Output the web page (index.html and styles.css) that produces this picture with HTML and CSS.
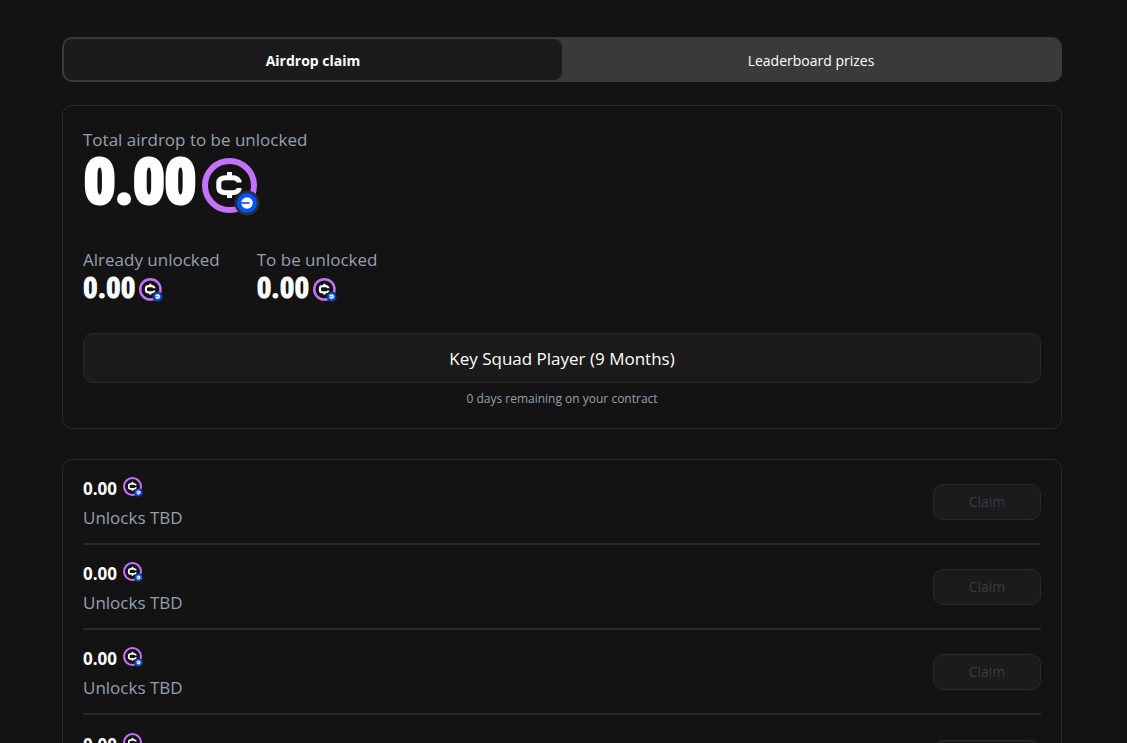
FILE: index.html
```html
<!DOCTYPE html>
<html lang="en">
<head>
  <meta charset="UTF-8" />
  <meta name="viewport" content="width=device-width, initial-scale=1.0"/>
  <title>Airdrop claim</title>
  <link rel="stylesheet" href="styles.css">
</head>
<body>

  <!-- Shared coin icon -->
  <svg class="sprite" aria-hidden="true">
    <symbol id="coin" viewBox="0 0 58 58">
      <circle cx="27.5" cy="27.5" r="24.5" fill="#131313" stroke="#c571ff" stroke-width="6"/>
      <path d="M37 24.5V23Q35 19.700 31 19.700H24Q16.800 19.700 16.800 25V29.500Q16.800 34.700 24 34.700H31Q35 34.700 37 31.500V30" fill="none" stroke="#fff" stroke-width="5"/>
      <rect x="25" y="14" width="5" height="5" fill="#fff"/>
      <rect x="25" y="35" width="5" height="5" fill="#fff"/>
      <circle cx="45" cy="45" r="12.5" fill="#26303d"/>
      <circle cx="45" cy="45" r="10" fill="#0052ff"/>
      <circle cx="45" cy="45" r="5.8" fill="#fff"/>
      <path d="M39 45h8.500" stroke="#0052ff" stroke-width="1.6"/>
    </symbol>
  </svg>

  <main class="container">
    <div class="tabs">
      <button type="button" class="tab active">Airdrop claim</button>
      <button type="button" class="tab">Leaderboard prizes</button>
    </div>

    <section class="card summary">
      <div class="label">Total airdrop to be unlocked</div>
      <div class="total">0.00 <svg class="coin-lg"><use href="#coin"/></svg></div>

      <div class="stats">
        <div>
          <div class="label">Already unlocked</div>
          <div class="amount">0.00 <svg class="coin-md"><use href="#coin"/></svg></div>
        </div>
        <div>
          <div class="label">To be unlocked</div>
          <div class="amount">0.00 <svg class="coin-md"><use href="#coin"/></svg></div>
        </div>
      </div>

      <button type="button" class="contract">Key Squad Player (9 Months)</button>
      <p class="remaining">0 days remaining on your contract</p>
    </section>

    <section class="card unlocks">
      <div class="unlock">
        <div class="info">
          <div class="value">0.00 <svg class="coin-sm"><use href="#coin"/></svg></div>
          <div class="label">Unlocks TBD</div>
        </div>
        <button type="button" class="claim" disabled>Claim</button>
      </div>
      <div class="unlock">
        <div class="info">
          <div class="value">0.00 <svg class="coin-sm"><use href="#coin"/></svg></div>
          <div class="label">Unlocks TBD</div>
        </div>
        <button type="button" class="claim" disabled>Claim</button>
      </div>
      <div class="unlock">
        <div class="info">
          <div class="value">0.00 <svg class="coin-sm"><use href="#coin"/></svg></div>
          <div class="label">Unlocks TBD</div>
        </div>
        <button type="button" class="claim" disabled>Claim</button>
      </div>
      <div class="unlock">
        <div class="info">
          <div class="value">0.00 <svg class="coin-sm"><use href="#coin"/></svg></div>
          <div class="label">Unlocks TBD</div>
        </div>
        <button type="button" class="claim" disabled>Claim</button>
      </div>
    </section>
  </main>

</body>
</html>
```
FILE: styles.css
```css
* {
  box-sizing: border-box;
}

body {
  font-family: "Segoe UI", "Open Sans", "Noto Sans", sans-serif;
  background: #131313;
  color: #fff;
  margin: 0;
  padding: 37px 65px 37px 62px;
  height: 100vh;
  overflow: hidden;
}

.sprite {
  display: none;
}

button {
  font-family: inherit;
  color: #fff;
  cursor: pointer;
}

.tabs {
  display: flex;
  background: #3a3a3a;
  border-radius: 10px;
  padding: 2px;
  margin-bottom: 23px;
}

.tab {
  flex: 1;
  height: 41px;
  padding: 2px 0 0;
  border: none;
  border-radius: 8px;
  background: none;
  font-size: 14px;
}

.tab.active {
  background: #1b1b1b;
  font-weight: 700;
}

.card {
  border: 1px solid #2a2a2a;
  border-radius: 10px;
  padding: 0 20px;
  margin-bottom: 30px;
}

.summary {
  padding: 20px;
}

.label {
  font-size: 17px;
  line-height: 28px;
  color: #94a0b0;
}

.total,
.amount {
  display: flex;
  font-family: "Liberation Sans Narrow", "Roboto Condensed", sans-serif;
  font-weight: 700;
}

.total {
  align-items: flex-start;
  gap: 6px;
  height: 64px;
  margin-bottom: 28px;
  padding-left: 1px;
  font-size: 62px;
  line-height: 56px;
  -webkit-text-stroke: 4px #fff;
}

.amount {
  align-items: center;
  gap: 4px;
  font-size: 29px;
  line-height: 28px;
  -webkit-text-stroke: 1px #fff;
}

.coin-lg {
  width: 58px;
  height: 58px;
  margin-top: 4px;
}

.coin-md {
  width: 24px;
  height: 24px;
  margin-top: 4px;
}

.coin-sm {
  width: 20px;
  height: 20px;
  margin-bottom: 4px;
}

.stats {
  display: flex;
  gap: 37px;
  margin-bottom: 31px;
}

.contract {
  display: block;
  width: 100%;
  height: 50px;
  background: #1b1b1b;
  border: 1px solid #2a2a2a;
  border-radius: 10px;
  font-size: 17px;
}

.remaining {
  margin: 6px 0 0;
  font-size: 12px;
  line-height: 19px;
  text-align: center;
  color: #94a0b0;
}

.unlock {
  display: flex;
  align-items: center;
  justify-content: space-between;
  height: 85px;
  border-bottom: 2px solid #2a2a2a;
}

.unlock:last-child {
  border-bottom: none;
}

.info {
  padding-top: 3px;
}

.value {
  display: flex;
  align-items: center;
  gap: 6px;
  font-size: 17px;
  line-height: 30px;
  font-weight: 700;
}

.claim {
  width: 108px;
  height: 36px;
  background: #1b1b1b;
  border: 1px solid #2a2a2a;
  border-radius: 10px;
  font-size: 14px;
  color: #3a3a48;
}
```
